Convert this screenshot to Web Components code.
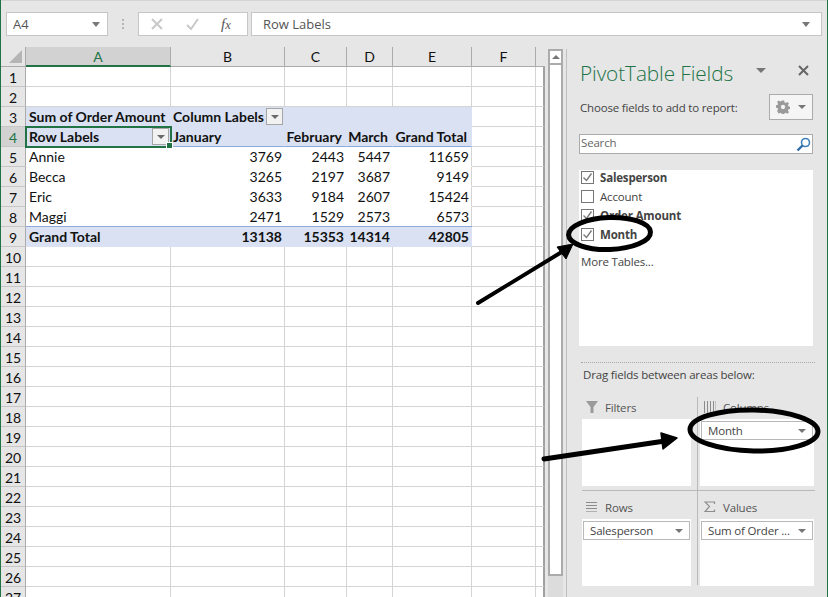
<!DOCTYPE html>
<html>
<head>
<meta charset="utf-8">
<title>PivotTable Fields</title>
<style>
html, body { margin: 0; height: 100%; overflow: hidden; background: #e6e6e6; }
</style>
</head>
<body>
<xl-app>
  <xl-formula-bar slot="top" cell="A4" value="Row Labels"></xl-formula-bar>
  <xl-sheet></xl-sheet>
  <xl-scrollbar></xl-scrollbar>
  <xl-pivot-panel>
    <xl-field checked bold>Salesperson</xl-field>
    <xl-field>Account</xl-field>
    <xl-field checked bold>Order Amount</xl-field>
    <xl-field checked bold>Month</xl-field>

    <xl-area slot="areas" label="Filters" icon="filter"></xl-area>
    <xl-area slot="areas" label="Columns" icon="columns" item="Month"></xl-area>
    <xl-area slot="areas" label="Rows" icon="rows" item="Salesperson"></xl-area>
    <xl-area slot="areas" label="Values" icon="sigma" item="Sum of Order ..."></xl-area>
  </xl-pivot-panel>
  <xl-annotations slot="over"></xl-annotations>
</xl-app>

<script>
// shell: green window edge, top bar, then sheet / scrollbar / panel side by side
class XlApp extends HTMLElement {
  constructor() {
    super();
    this.attachShadow({ mode: 'open' });
    this.shadowRoot.innerHTML = `
    <style>
      :host { display: flex; flex-direction: column; position: relative; box-sizing: border-box;
              width: 828px; height: 597px; overflow: hidden; background: #e6e6e6;
              border-left: 1px solid #217346; border-right: 1px solid #217346; }
      .main { display: flex; flex: 1; min-height: 0; }
    </style>
    <slot name="top"></slot>
    <div class="main"><slot></slot></div>
    <slot name="over"></slot>
    `;
  }
}

class XlFormulaBar extends HTMLElement {
  constructor() {
    super();
    this.attachShadow({ mode: 'open' });
  }
  connectedCallback() {
    this.shadowRoot.innerHTML = `
    <style>
      :host { display: flex; align-items: stretch; box-sizing: border-box; height: 47px;
              padding: 11px 5px 11px 5px; border-top: 1px solid #d4d4d4;
              font: 13px "Open Sans", sans-serif; color: #555; }
      .box { background: #fff; border: 1px solid #c6c6c6; display: flex; align-items: center; box-sizing: border-box; }
      .name { width: 102px; padding: 0 7px 0 6px; justify-content: space-between; }
      .tri { width: 0; height: 0; border: 4px solid transparent; border-top: 5px solid #777; border-bottom: 0; }
      .grip { width: 30px; display: flex; flex-direction: column; align-items: center; justify-content: center; gap: 2px; }
      .grip i { width: 2px; height: 2px; background: #b4b4b4; }
      .btns { width: 110px; padding: 0 0 0 11px; gap: 21px; }
      .fx { font: italic 15px "Liberation Serif", serif; color: #555; }
      .value { flex: 1; margin-left: 3px; padding: 0 11px; justify-content: space-between; }
    </style>
    <div class="box name"><span>${this.getAttribute('cell')}</span><i class="tri"></i></div>
    <div class="grip"><i></i><i></i><i></i></div>
    <div class="box btns">
      <svg width="14" height="14" viewBox="0 0 14 14"><path d="M2 2l10 10M12 2L2 12" stroke="#c8c8c8" stroke-width="2" fill="none"/></svg>
      <svg width="15" height="14" viewBox="0 0 15 14"><path d="M2 8l4 4 7-10" stroke="#c8c8c8" stroke-width="2" fill="none"/></svg>
      <span class="fx">f<small>x</small></span>
    </div>
    <div class="box value"><span>${this.getAttribute('value')}</span><i class="tri"></i></div>
    `;
  }
}

const COLS = ['A', 'B', 'C', 'D', 'E', 'F'];
// row number -> cell text, pivot rows only
const PIVOT = {
  5: ['Annie', 3769, 2443, 5447, 11659],
  6: ['Becca', 3265, 2197, 3687, 9149],
  7: ['Eric', 3633, 9184, 2607, 15424],
  8: ['Maggi', 2471, 1529, 2573, 6573],
  9: ['Grand Total', 13138, 15353, 14314, 42805]
};

class XlSheet extends HTMLElement {
  constructor() {
    super();
    this.attachShadow({ mode: 'open' });
  }
  connectedCallback() {
    let html = '<div class="corner"><svg width="14" height="13" viewBox="0 0 14 13"><path d="M13 0v13H0z" fill="#b5b5b5"/></svg></div>';
    COLS.forEach(c => {
      html += `<div class="ch ${c === 'A' ? 'sel' : ''}">${c}</div>`;
    });
    html += '<div class="ch end"></div>';

    for (let r = 1; r <= 27; r++) {
      html += `<div class="rh ${r === 4 ? 'sel' : ''}">${r}</div>`;
      html += this.#row(r);
    }
    this.shadowRoot.innerHTML = `
    <style>
      :host { display: block; width: 546px; flex: none; overflow: hidden;
              font: 14px Lato, sans-serif; color: #111; }
      .grid { display: grid; grid-template-columns: 25px 145px 114px 62px 46px 79px 64px 9px;
              grid-auto-rows: 20px; }
      .corner { display: flex; justify-content: flex-end; align-items: flex-end; padding: 0 2px 3px 0; box-sizing: border-box;
                border-right: 1px solid #ababab; border-bottom: 1px solid #ababab; }
      .ch { display: flex; align-items: center; justify-content: center; background: #e6e6e6; box-sizing: border-box;
            border-right: 1px solid #ababab; border-bottom: 1px solid #ababab; }
      .ch.end { border-right: 0; }
      .ch.sel { background: #d2d2d2; color: #217346; border-bottom: 2px solid #217346; }
      .rh { display: flex; align-items: center; justify-content: center; background: #e6e6e6; box-sizing: border-box;
            padding-top: 1px; border-right: 1px solid #ababab; border-bottom: 1px solid #c6c6c6; }
      .rh.sel { background: #d2d2d2; color: #217346; }
      .c { display: flex; align-items: center; justify-content: space-between; box-sizing: border-box; background: #fff;
           padding: 0 2px; white-space: nowrap; position: relative;
           border-right: 1px solid #d4d4d4; border-bottom: 1px solid #d4d4d4; }
      .c.a { padding-left: 3px; }
      .c.last { border-right: 2px solid #a0a0a0; }
      .c.num { justify-content: flex-end; }
      .c.pad { justify-content: flex-end; padding-right: 4px; }
      .c.blue { background: #d9e1f2; border-right-color: #d9e1f2; border-bottom-color: #d9e1f2; font-weight: 700; }
      .c.under { border-bottom-color: #8ea9db; }
      .c.plain { border-right-color: #fff; border-bottom-color: #fff; }
      .c.plain.e { border-right-color: #d4d4d4; }
      .c.top { box-shadow: 0 -1px 0 #8ea9db; }
      .c.active { outline: 2px solid #217346; outline-offset: -1px; z-index: 2; }
      .c.active::after { content: ''; position: absolute; right: -3px; bottom: -3px; width: 5px; height: 5px;
                         background: #217346; border: 1px solid #fff; box-sizing: content-box; }
      .dd { flex: none; width: 17px; height: 17px; margin-right: -1px; box-sizing: border-box; background: #f2f2f2; border: 1px solid #a6a6a6;
            display: flex; align-items: center; justify-content: center; }
      .dd i { width: 0; height: 0; border: 4px solid transparent; border-top: 4px solid #6a6a6a; border-bottom: 0; }
    </style>
    <div class="grid">${html}</div>
    `;
  }

  #row(r) {
    const dd = '<span class="dd"><i></i></span>';
    const cell = (cls, text = '') => `<div class="c ${cls}">${text}</div>`;
    let out = '';
    if (r === 3) {
      out = cell('blue a', 'Sum of Order Amount') + cell('blue', 'Column Labels' + dd) + cell('blue') + cell('blue') + cell('blue');
    } else if (r === 4) {
      out = cell('blue a under active', 'Row Labels' + dd) + cell('blue under', 'January')
        + cell('blue under pad', 'February') + cell('blue under pad', 'March') + cell('blue under pad', 'Grand Total');
    } else if (PIVOT[r]) {
      const total = r === 9;
      PIVOT[r].forEach((v, i) => {
        let cls = total ? 'blue top' : 'plain';
        if (i === 0) cls += ' a';
        else cls += ' num';
        if (i === 4) cls += ' e';
        out += cell(cls, v);
      });
    } else {
      out = cell('') + cell('') + cell('') + cell('') + cell('');
    }
    return out + cell('') + cell('last');
  }
}

class XlScrollbar extends HTMLElement {
  constructor() {
    super();
    this.attachShadow({ mode: 'open' });
    this.shadowRoot.innerHTML = `
    <style>
      :host { display: flex; flex-direction: column; flex: none; box-sizing: border-box; width: 15px; margin: 2px 0 0 1px; }
      .up { height: 15px; background: #fff; border: 2px solid #ababab; border-bottom-width: 1px; box-sizing: border-box;
            display: flex; align-items: center; justify-content: center; }
      .up i { width: 0; height: 0; border: 4px solid transparent; border-bottom: 4px solid #777; border-top: 0; }
      .thumb { height: 512px; background: #fff; border: 2px solid #ababab; border-top-width: 1px; box-sizing: border-box; }
      .track { flex: 1; background: #dcdcdc; }
    </style>
    <div class="up"><i></i></div>
    <div class="thumb"></div>
    <div class="track"></div>
    `;
  }
}

class XlField extends HTMLElement {
  constructor() {
    super();
    this.attachShadow({ mode: 'open' });
  }
  connectedCallback() {
    const tick = this.hasAttribute('checked')
      ? '<svg width="11" height="11" viewBox="0 0 11 11"><path d="M1.5 5.5l3 3 5-7" stroke="#7a7a7a" stroke-width="1.4" fill="none"/></svg>'
      : '';
    this.shadowRoot.innerHTML = `
    <style>
      :host { display: flex; align-items: center; gap: 6px; height: 19px; }
      :host([bold]) .t { font-weight: 700; }
      .box { width: 13px; height: 13px; box-sizing: border-box; border: 1px solid #777; background: #fff;
             display: flex; align-items: center; justify-content: center; }
    </style>
    <span class="box">${tick}</span><span class="t"><slot></slot></span>
    `;
  }
}

const AREA_ICONS = {
  filter: '<svg width="12" height="12" viewBox="0 0 12 12"><path d="M0 0h12L7.500 6v6h-3V6z" fill="#9a9a9a"/></svg>',
  columns: '<svg width="12" height="12" viewBox="0 0 12 12"><path d="M.5 0v12M3.500 0v12M6.500 0v12M9.500 0v12" stroke="#8c8c8c" fill="none"/><path d="M11.500 0v12" stroke="#c4c4c4" fill="none"/></svg>',
  rows: '<svg width="12" height="12" viewBox="0 0 12 12"><path d="M0 1.500h11M0 4.500h11M0 7.500h11" stroke="#8c8c8c" fill="none"/><path d="M0 10.500h11" stroke="#b0b0b0" fill="none"/></svg>',
  sigma: '<svg width="12" height="12" viewBox="0 0 12 12"><path d="M10.500 3V1H1l4.500 4.500L1 10.500h9.500V8.500" stroke="#8c8c8c" stroke-width="1.200" fill="none"/></svg>'
};

class XlArea extends HTMLElement {
  constructor() {
    super();
    this.attachShadow({ mode: 'open' });
  }
  connectedCallback() {
    const item = this.getAttribute('item');
    this.shadowRoot.innerHTML = `
    <style>
      :host { display: flex; flex-direction: column; min-width: 0; }
      .head { height: 20px; margin-bottom: 2px; display: flex; align-items: center; gap: 7px; padding-left: 4px; color: #555; }
      .body { height: 67px; background: #fff; padding: 2px 1px; box-sizing: border-box; }
      .pill { height: 19px; box-sizing: border-box; border: 1px solid #b8b8b8; background: #fff; display: flex;
              align-items: center; justify-content: space-between; padding: 0 6px; white-space: nowrap; }
      .pill i { flex: none; width: 0; height: 0; border: 4px solid transparent; border-top: 4px solid #777; border-bottom: 0; }
    </style>
    <div class="head">${AREA_ICONS[this.getAttribute('icon')]}<span>${this.getAttribute('label')}</span></div>
    <div class="body">${item ? `<div class="pill"><span>${item}</span><i></i></div>` : ''}</div>
    `;
  }
}

class XlPivotPanel extends HTMLElement {
  constructor() {
    super();
    this.attachShadow({ mode: 'open' });
    this.shadowRoot.innerHTML = `
    <style>
      :host { display: flex; flex-direction: column; flex: 1; min-width: 0; box-sizing: border-box;
              margin: 2px 0 0 3px; padding: 0 14px 0 12px; border-left: 1px solid #c0c0c0;
              font: 11.5px "Open Sans", sans-serif; letter-spacing: -.18px; color: #444; }
      .title { display: flex; align-items: center; height: 48px; padding-left: 1px; }
      h1 { margin: 0; flex: 1; font: 300 20.8px "Open Sans", sans-serif; color: #217346; letter-spacing: -.1px; }
      .caret { width: 0; height: 0; border: 5px solid transparent; border-top: 5px solid #777; border-bottom: 0; margin: 0 32px 6px 0; }
      .close { margin: 0 4px 6px 0; display: flex; }
      .choose { display: flex; align-items: center; justify-content: space-between; height: 26px; margin-top: -3px; padding-left: 1px; }
      .gear { width: 44px; height: 26px; box-sizing: border-box; border: 1px solid #ababab; background: #f5f5f5; display: flex;
              align-items: center; justify-content: center; gap: 8px; }
      .gear i { width: 0; height: 0; border: 4px solid transparent; border-top: 4px solid #777; border-bottom: 0; }
      .search { height: 20px; margin-top: 14px; box-sizing: border-box; background: #fff; border: 1px solid #ababab; display: flex;
                align-items: center; justify-content: space-between; padding: 0 1px; color: #666; }
      .search span { margin-bottom: 3px; }
      .list { height: 176px; margin-top: 16px; background: #fff; padding: 0 2px; box-sizing: border-box; margin-bottom: 0; }
      .fields { margin-top: -2px; }
      .more { margin-top: 10px; }
      .sep { margin: 16px -2px 0 2px; border-top: 1px dotted #a8a8a8; }
      .drag { padding: 4px 0 0 4px; height: 26px; box-sizing: border-box; }
      .areas { display: grid; grid-template-columns: 109px 114px; column-gap: 9px; padding: 0 0 0 3px; height: 188px;
               position: relative; margin-top: 8px; row-gap: 11px; align-content: start; }
      .v { position: absolute; left: 118px; top: 0; bottom: 0; width: 1px; background: #b9b9b9; }
      .h { position: absolute; left: 3px; right: -2px; top: 93px; height: 1px; background: #b9b9b9; }
    </style>
    <div class="title">
      <h1>PivotTable Fields</h1>
      <i class="caret"></i>
      <span class="close"><svg width="11" height="11" viewBox="0 0 11 11"><path d="M1 1l9 9M10 1l-9 9" stroke="#666" stroke-width="2" fill="none"/></svg></span>
    </div>
    <div class="choose">
      <span>Choose fields to add to report:</span>
      <span class="gear">
        <svg width="14" height="14" viewBox="0 0 14 14"><path fill="#9a9a9a" fill-rule="evenodd" d="M5.800 0h2.400l.4 2 1.300.6 1.800-1.100 1.700 1.700-1.100 1.800.6 1.300 2 .4v2.400l-2 .4-.6 1.300 1.100 1.800-1.700 1.700-1.800-1.100-1.300.6-.4 2H5.800l-.4-2-1.300-.6-1.800 1.100L.6 11.100l1.100-1.800-.6-1.300-2-.4V5.200l2-.4.6-1.300L.6 1.700 2.300 0l1.800 1.100L5.400.5zM7 4.700a2.300 2.300 0 1 0 0 4.600 2.300 2.300 0 0 0 0-4.600z" transform="translate(.5 .5) scale(.93)"/></svg>
        <i></i>
      </span>
    </div>
    <div class="search">
      <span>Search</span>
      <svg width="15" height="15" viewBox="0 0 15 15"><circle cx="9.500" cy="5.500" r="4" fill="none" stroke="#3f7fb8" stroke-width="1.600"/><path d="M6.500 8.500L1.500 13.500" stroke="#2f6ea8" stroke-width="2.400"/></svg>
    </div>
    <div class="list">
      <div class="fields"><slot></slot></div>
      <div class="more">More Tables...</div>
    </div>
    <div class="sep"></div>
    <div class="drag">Drag fields between areas below:</div>
    <div class="areas">
      <slot name="areas"></slot>
      <div class="v"></div>
      <div class="h"></div>
    </div>
    `;
  }
}

// hand drawn marks that lie over everything else
class XlAnnotations extends HTMLElement {
  constructor() {
    super();
    this.attachShadow({ mode: 'open' });
    this.shadowRoot.innerHTML = `
    <style>
      :host { position: absolute; left: -1px; top: 0; width: 828px; height: 597px; pointer-events: none; }
      svg { display: block; }
    </style>
    <svg width="828" height="597" viewBox="0 0 828 597">
      <g fill="none" stroke="#000" stroke-width="5">
        <ellipse cx="609.500" cy="233.500" rx="41" ry="16" transform="rotate(-2 609.500 233.500)"/>
        <ellipse cx="754" cy="430.500" rx="64" ry="20.500" transform="rotate(1 754 430.500)"/>
      </g>
      <path d="M478 303L565 250" stroke="#000" stroke-width="4" stroke-linecap="round"/>
      <path d="M573 244L557 247 566 259z" fill="#000" stroke="#000" stroke-linejoin="round"/>
      <path d="M544 459L665 441" stroke="#000" stroke-width="5" stroke-linecap="round"/>
      <path d="M677 438L661 433 663 449z" fill="#000" stroke="#000" stroke-width="1.500" stroke-linejoin="round"/>
    </svg>
    `;
  }
}

customElements.define('xl-app', XlApp);
customElements.define('xl-formula-bar', XlFormulaBar);
customElements.define('xl-sheet', XlSheet);
customElements.define('xl-scrollbar', XlScrollbar);
customElements.define('xl-field', XlField);
customElements.define('xl-area', XlArea);
customElements.define('xl-pivot-panel', XlPivotPanel);
customElements.define('xl-annotations', XlAnnotations);
</script>
</body>
</html>
